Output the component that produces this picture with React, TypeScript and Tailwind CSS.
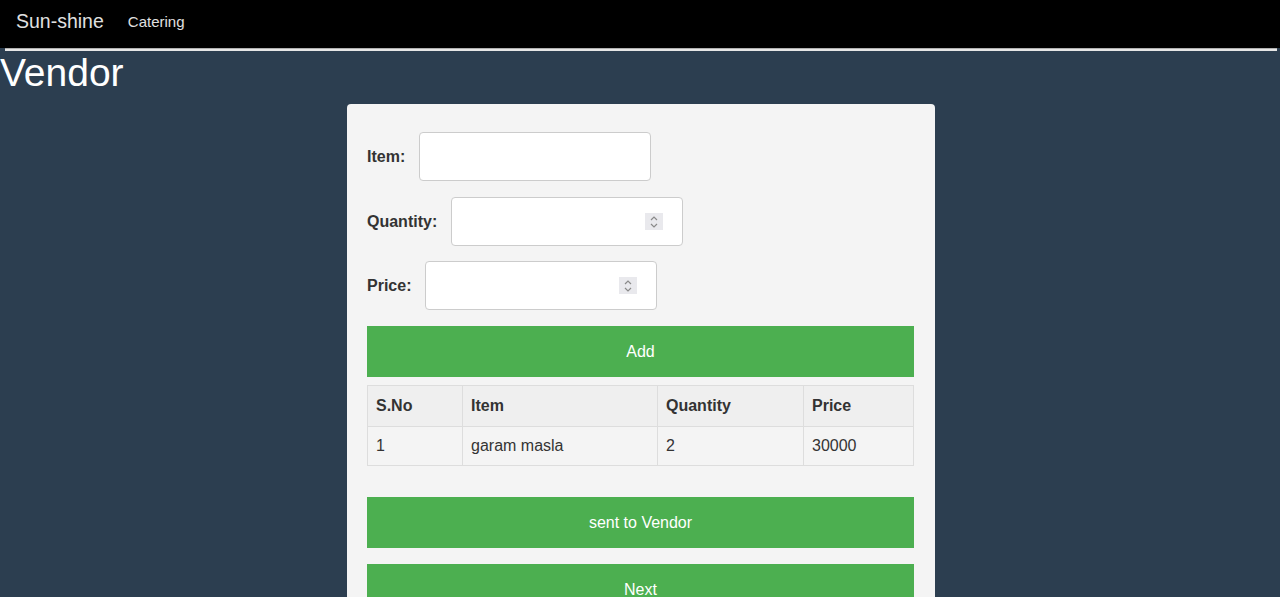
import React from "react";

function Spinner() {
  return (
    <div className="w-[18px] h-[17px] bg-[#e9e9ed] flex flex-col items-center justify-center">
      <svg width="10" height="14" viewBox="0 0 10 14" fill="none" stroke="#8a8a8a" strokeWidth="1.2">
        <polyline points="2,5 5,2 8,5" />
        <polyline points="2,9 5,12 8,9" />
      </svg>
    </div>
  );
}

function Field({ label, number, className = "" }: { label: string; number?: boolean; className?: string }) {
  return (
    <div className={"flex items-center gap-[14px] h-[49px] " + className}>
      <label className="font-bold text-[16px] text-[#333]">{label}</label>
      <div className="w-[232px] h-[49px] bg-white border border-[#ccc] rounded-[4px] flex items-center pl-3 pr-[19px]">
        <input type="text" className="flex-1 min-w-0 outline-none bg-transparent" />
        {number && <Spinner />}
      </div>
    </div>
  );
}

export default function App() {
  const head = "border border-[#ddd] px-2 py-[11px] leading-[18px] text-left font-bold";
  const cell = "border border-[#ddd] px-2 py-[10px] leading-[18px] text-left";
  return (
    <div className="min-h-[597px] bg-[#2c3e50] font-['Liberation_Sans',Arial,sans-serif]">
      <nav className="bg-black h-[48px] flex items-center pb-[4px]">
        <span className="ml-4 text-[19.5px] text-[#e0e0e0]">Sun-shine</span>
        <span className="ml-[24px] text-[15px] text-[#e0e0e0] mt-[1px]">Catering</span>
      </nav>
      <div className="ml-[5px] mr-[3px] h-[3px] border-t border-[#b0b0b0] bg-[#e6e6e6]" />
      <h1 className="text-[39px] leading-[44px] text-white m-0">Vendor</h1>
      <div className="ml-[347px] mt-[9px] w-[588px] bg-[#f4f4f4] rounded-[4px] pl-5 pr-[21px] pt-[28px] pb-5">
        <div className="flex flex-col">
          <Field label="Item:" />
          <Field label="Quantity:" number className="mt-4" />
          <Field label="Price:" number className="mt-[15px]" />
        </div>
        <button className="mt-4 w-full h-[51px] bg-[#4caf50] text-white text-[16px]">Add</button>
        <table className="mt-2 w-full border-collapse text-[16px] text-[#333]">
          <thead>
            <tr className="bg-[#efefef]">
              <th className={head + " w-[95px]"}>S.No</th>
              <th className={head + " w-[195px]"}>Item</th>
              <th className={head + " w-[146px]"}>Quantity</th>
              <th className={head}>Price</th>
            </tr>
          </thead>
          <tbody>
            <tr>
              <td className={cell}>1</td>
              <td className={cell}>garam masla</td>
              <td className={cell}>2</td>
              <td className={cell}>30000</td>
            </tr>
          </tbody>
        </table>
        <button className="mt-[31px] w-full h-[51px] bg-[#4caf50] text-white text-[16px]">sent to Vendor</button>
        <button className="mt-4 w-full h-[51px] bg-[#4caf50] text-white text-[16px]">Next</button>
      </div>
    </div>
  );
}
